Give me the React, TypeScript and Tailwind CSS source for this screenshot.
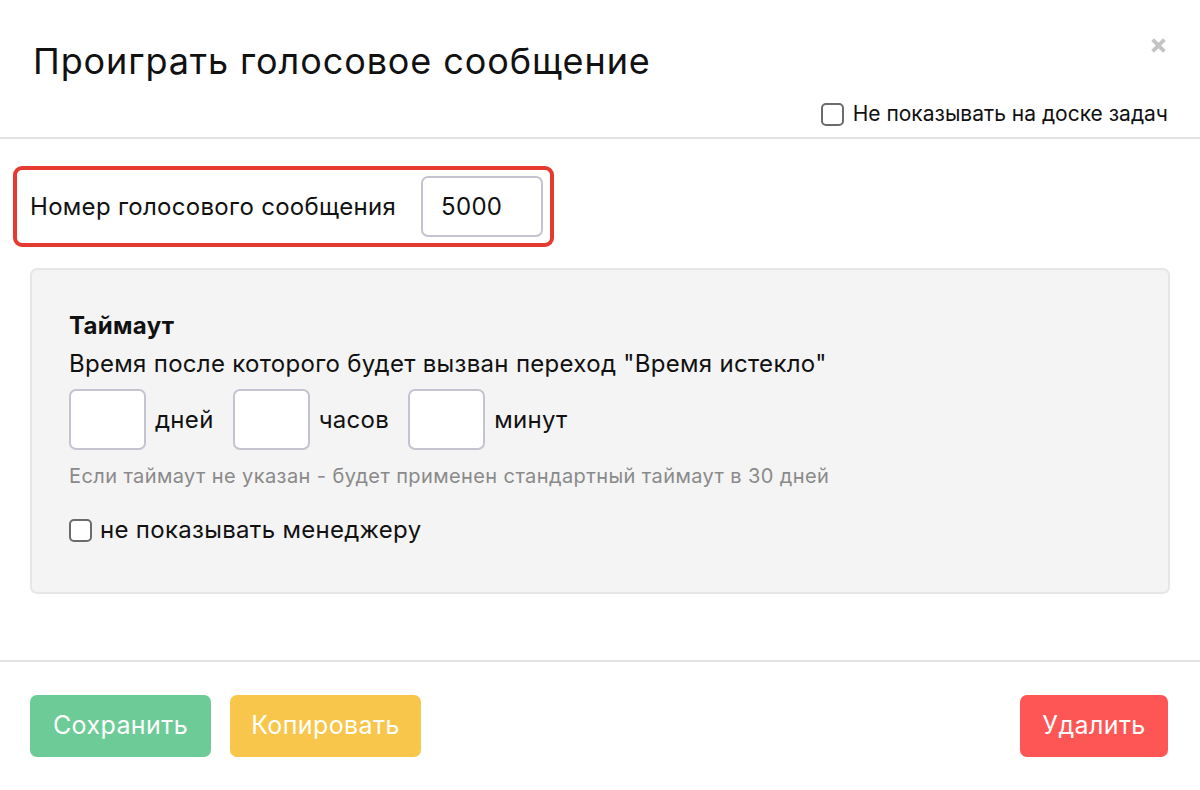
const font = { fontFamily: "Inter, 'Noto Sans', sans-serif" };

const Checkbox = () => (
  <span className="inline-block w-[23px] h-[23px] rounded-[5px] border-2 border-[#6b6b6b] bg-white shrink-0" />
);

const NumBox = () => (
  <div className="w-[77px] h-[61px] rounded-[7px] border-2 border-[#c4c4d0] bg-white shrink-0" />
);

export default function App() {
  return (
    <div style={font} className="w-[1200px] h-[790px] bg-white text-[#111] flex flex-col">
      {/* Header */}
      <div className="h-[139px] border-b-2 border-[#e3e3e3] pl-[33px] pr-[32px] flex flex-col">
        <div className="flex justify-between items-start pt-[39px]">
          <h1 className="text-[36px] leading-[44px] font-normal tracking-[0.9px]">Проиграть голосовое сообщение</h1>
          <svg className="w-[17px] h-[17px] mt-[-2px] mr-[1px]" viewBox="0 0 16 16" fill="none">
            <path d="M2.5 2.5L13.5 13.5M13.5 2.5L2.5 13.5" stroke="#c4c4c4" strokeWidth="3.6" strokeLinecap="butt" />
          </svg>
        </div>
        <div className="flex justify-end items-center gap-[9px] mt-[17px]">
          <Checkbox />
          <span className="text-[21px] leading-[28px]">Не показывать на доске задач</span>
        </div>
      </div>

      {/* Body */}
      <div className="flex-1 flex flex-col pt-[27px] px-[30px] text-[24px] tracking-[0.3px]">
        <div className="ml-[-17px] w-[541px] h-[81px] rounded-[9px] border-[4px] border-[#e53a30] flex items-center pl-[13px] gap-[25px]">
          <span>Номер голосового сообщения</span>
          <div className="w-[122px] h-[61px] rounded-[7px] border-2 border-[#c4c4d0] flex items-center pl-[18px]">5000</div>
        </div>

        <div className="mt-[21px] h-[326px] rounded-[7px] border-2 border-[#e6e6e6] bg-[#f4f4f4] pl-[37px] pt-[41px]">
          <div className="font-bold leading-[30px]">Таймаут</div>
          <div className="leading-[34px] mt-[6px]">Время после которого будет вызван переход "Время истекло"</div>
          <div className="flex items-center mt-[8px]">
            <NumBox />
            <span className="ml-[9px] mr-[19px]">дней</span>
            <NumBox />
            <span className="ml-[9px] mr-[19px]">часов</span>
            <NumBox />
            <span className="ml-[9px]">минут</span>
          </div>
          <div className="text-[20px] tracking-[0.4px] text-[#8a8a8a] mt-[12px] leading-[28px]">Если таймаут не указан - будет применен стандартный таймаут в 30 дней</div>
          <div className="flex items-center gap-[8px] mt-[25px]">
            <Checkbox />
            <span className="leading-[30px]">не показывать менеджеру</span>
          </div>
        </div>
      </div>

      {/* Footer */}
      <div className="h-[130px] border-t-2 border-[#e3e3e3] pl-[30px] pr-[32px] flex items-center justify-between text-white text-[25px] tracking-[0.4px]">
        <div className="flex gap-[19px]">
          <button className="w-[181px] h-[62px] rounded-[7px] bg-[#6ccb96]">Сохранить</button>
          <button className="w-[191px] h-[62px] rounded-[7px] bg-[#f8c64b]">Копировать</button>
        </div>
        <button className="w-[148px] h-[62px] rounded-[7px] bg-[#fe5555]">Удалить</button>
      </div>
    </div>
  );
}
